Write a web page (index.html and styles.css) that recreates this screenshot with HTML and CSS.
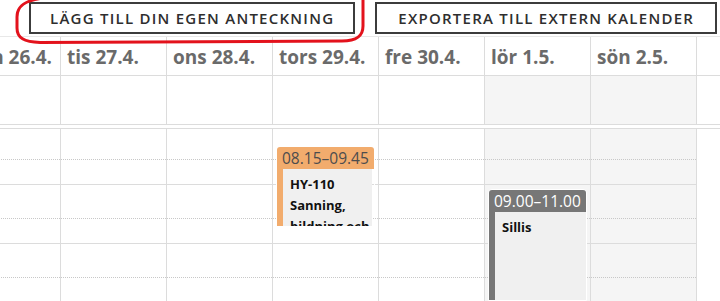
FILE: index.html
```html
<!DOCTYPE html>
<html>
  <head>
    <title>Kalender - vecka 17</title>
    <meta charset="utf-8" />
    <meta name="viewport" content="width=device-width, initial-scale=1" />
    <link rel="stylesheet" href="styles.css">
  </head>
  <body>
    <div class="toolbar">
      <a href="#" class="btn">Lägg till din egen anteckning</a>
      <a href="#" class="btn">Exportera till extern kalender</a>
    </div>

    <!-- hand drawn marker round the first button -->
    <svg class="marker" width="380" height="50" viewBox="0 0 380 50">
      <path d="M44 -2 C25 0 17 6 17 17 L17 28 C17 38 24 42 40 42.5 L342 41 C357 41 363 36 363 26 L363 -4"
            fill="none" stroke="#e3121c" stroke-width="3" stroke-linecap="round" />
    </svg>

    <div class="calendar">
      <div class="row days">
        <div class="day">mån 26.4.</div>
        <div class="day">tis 27.4.</div>
        <div class="day">ons 28.4.</div>
        <div class="day">tors 29.4.</div>
        <div class="day">fre 30.4.</div>
        <div class="day">lör 1.5.</div>
        <div class="day">sön 2.5.</div>
      </div>

      <div class="row allday">
        <div class="cell"></div>
        <div class="cell"></div>
        <div class="cell"></div>
        <div class="cell"></div>
        <div class="cell"></div>
        <div class="cell weekend"></div>
        <div class="cell weekend"></div>
      </div>

      <div class="row times">
        <div class="col">
          <div class="slot first"></div><div class="slot"></div>
          <div class="slot half"></div><div class="slot"></div>
          <div class="slot half"></div><div class="slot"></div>
        </div>
        <div class="col">
          <div class="slot first"></div><div class="slot"></div>
          <div class="slot half"></div><div class="slot"></div>
          <div class="slot half"></div><div class="slot"></div>
        </div>
        <div class="col">
          <div class="slot first"></div><div class="slot"></div>
          <div class="slot half"></div><div class="slot"></div>
          <div class="slot half"></div><div class="slot"></div>
        </div>
        <div class="col">
          <div class="slot first"></div><div class="slot"></div>
          <div class="slot half"></div><div class="slot"></div>
          <div class="slot half"></div><div class="slot"></div>
          <div class="event lecture" style="top: 17px; height: 79px;">
            <div class="event-time">08.15–09.45</div>
            <div class="event-body">
              <b>HY-110</b>
              <b>Sanning, bildning och vetande</b>
            </div>
          </div>
        </div>
        <div class="col">
          <div class="slot first"></div><div class="slot"></div>
          <div class="slot half"></div><div class="slot"></div>
          <div class="slot half"></div><div class="slot"></div>
        </div>
        <div class="col weekend">
          <div class="slot first"></div><div class="slot"></div>
          <div class="slot half"></div><div class="slot"></div>
          <div class="slot half"></div><div class="slot"></div>
          <div class="event own" style="top: 60px; height: 110px;">
            <div class="event-time">09.00–11.00</div>
            <div class="event-body">
              <b>Sillis</b>
            </div>
          </div>
        </div>
        <div class="col weekend">
          <div class="slot first"></div><div class="slot"></div>
          <div class="slot half"></div><div class="slot"></div>
          <div class="slot half"></div><div class="slot"></div>
        </div>
      </div>
    </div>
  </body>
</html>
```

FILE: styles.css
```css
body {
  margin: 0;
  width: 720px;
  height: 301px;
  overflow: hidden;
  position: relative;
  background: white;
  font-family: "Open Sans", "Noto Sans", sans-serif;
}
.toolbar {
  display: flex;
  gap: 20px;
  padding: 2px 0 0 29px;
  height: 35px;
  box-sizing: border-box;
}
.btn {
  display: block;
  height: 32px;
  box-sizing: border-box;
  border: 2px solid #3c3c3c;
  padding: 0 19px;
  color: #2e2e2e;
  text-decoration: none;
  text-transform: uppercase;
  font-size: 15px;
  font-weight: 600;
  letter-spacing: 1.25px;
  line-height: 28px;
  white-space: nowrap;
}
.btn + .btn {
  padding: 0 21px;
}
.marker {
  position: absolute;
  left: 0;
  top: 0;
}
.calendar {
  margin-left: -45px;
  border-top: 1px solid #e8e8e8;
  margin-top: 1px;
}
.row {
  display: grid;
  grid-template-columns: repeat(7, 106px);
}
.day,
.cell,
.col {
  border-right: 1px solid #dcdcdc;
}
.day {
  height: 38px;
  padding-left: 6px;
  font-size: 19px;
  font-weight: 700;
  color: #6a6a6a;
  line-height: 40px;
  white-space: nowrap;
  overflow: hidden;
}
.allday {
  border-top: 1px solid #dcdcdc;
  border-bottom: 1px solid #dcdcdc;
}
.cell {
  height: 48px;
}
.weekend {
  background: #f5f5f5;
}
.times {
  margin-top: 3px;
  border-top: 1px solid #dcdcdc;
}
.col {
  position: relative;
}
.slot {
  height: 24px;
  border-bottom: 1px solid #dcdcdc;
}
.slot.first,
.slot.half {
  height: 33px;
  border-bottom: 1px dotted #c8c8c8;
}
.slot.first {
  height: 30px;
}
.event {
  position: absolute;
  left: 3px;
  width: 97px;
  display: flex;
  flex-direction: column;
  border: 1px solid white;
  border-radius: 4px 4px 0 0;
  overflow: hidden;
}
.event-time {
  height: 22px;
  padding-left: 5px;
  font-size: 15.5px;
  line-height: 22px;
  white-space: nowrap;
}
.event-body {
  flex: 1;
  background: #f0f0f0;
  border-left: 6px solid;
  padding: 5px 0 0 7px;
  font-size: 13px;
  line-height: 21px;
  color: #111;
}
.event-body b {
  display: block;
}
.lecture .event-time {
  background: #f2ac6d;
  color: #4d4d4d;
}
.lecture .event-body {
  border-color: #f2ac6d;
  margin-right: 2px;
}
.own .event-time {
  background: #777;
  color: white;
}
.own .event-body {
  border-color: #777;
}
```
